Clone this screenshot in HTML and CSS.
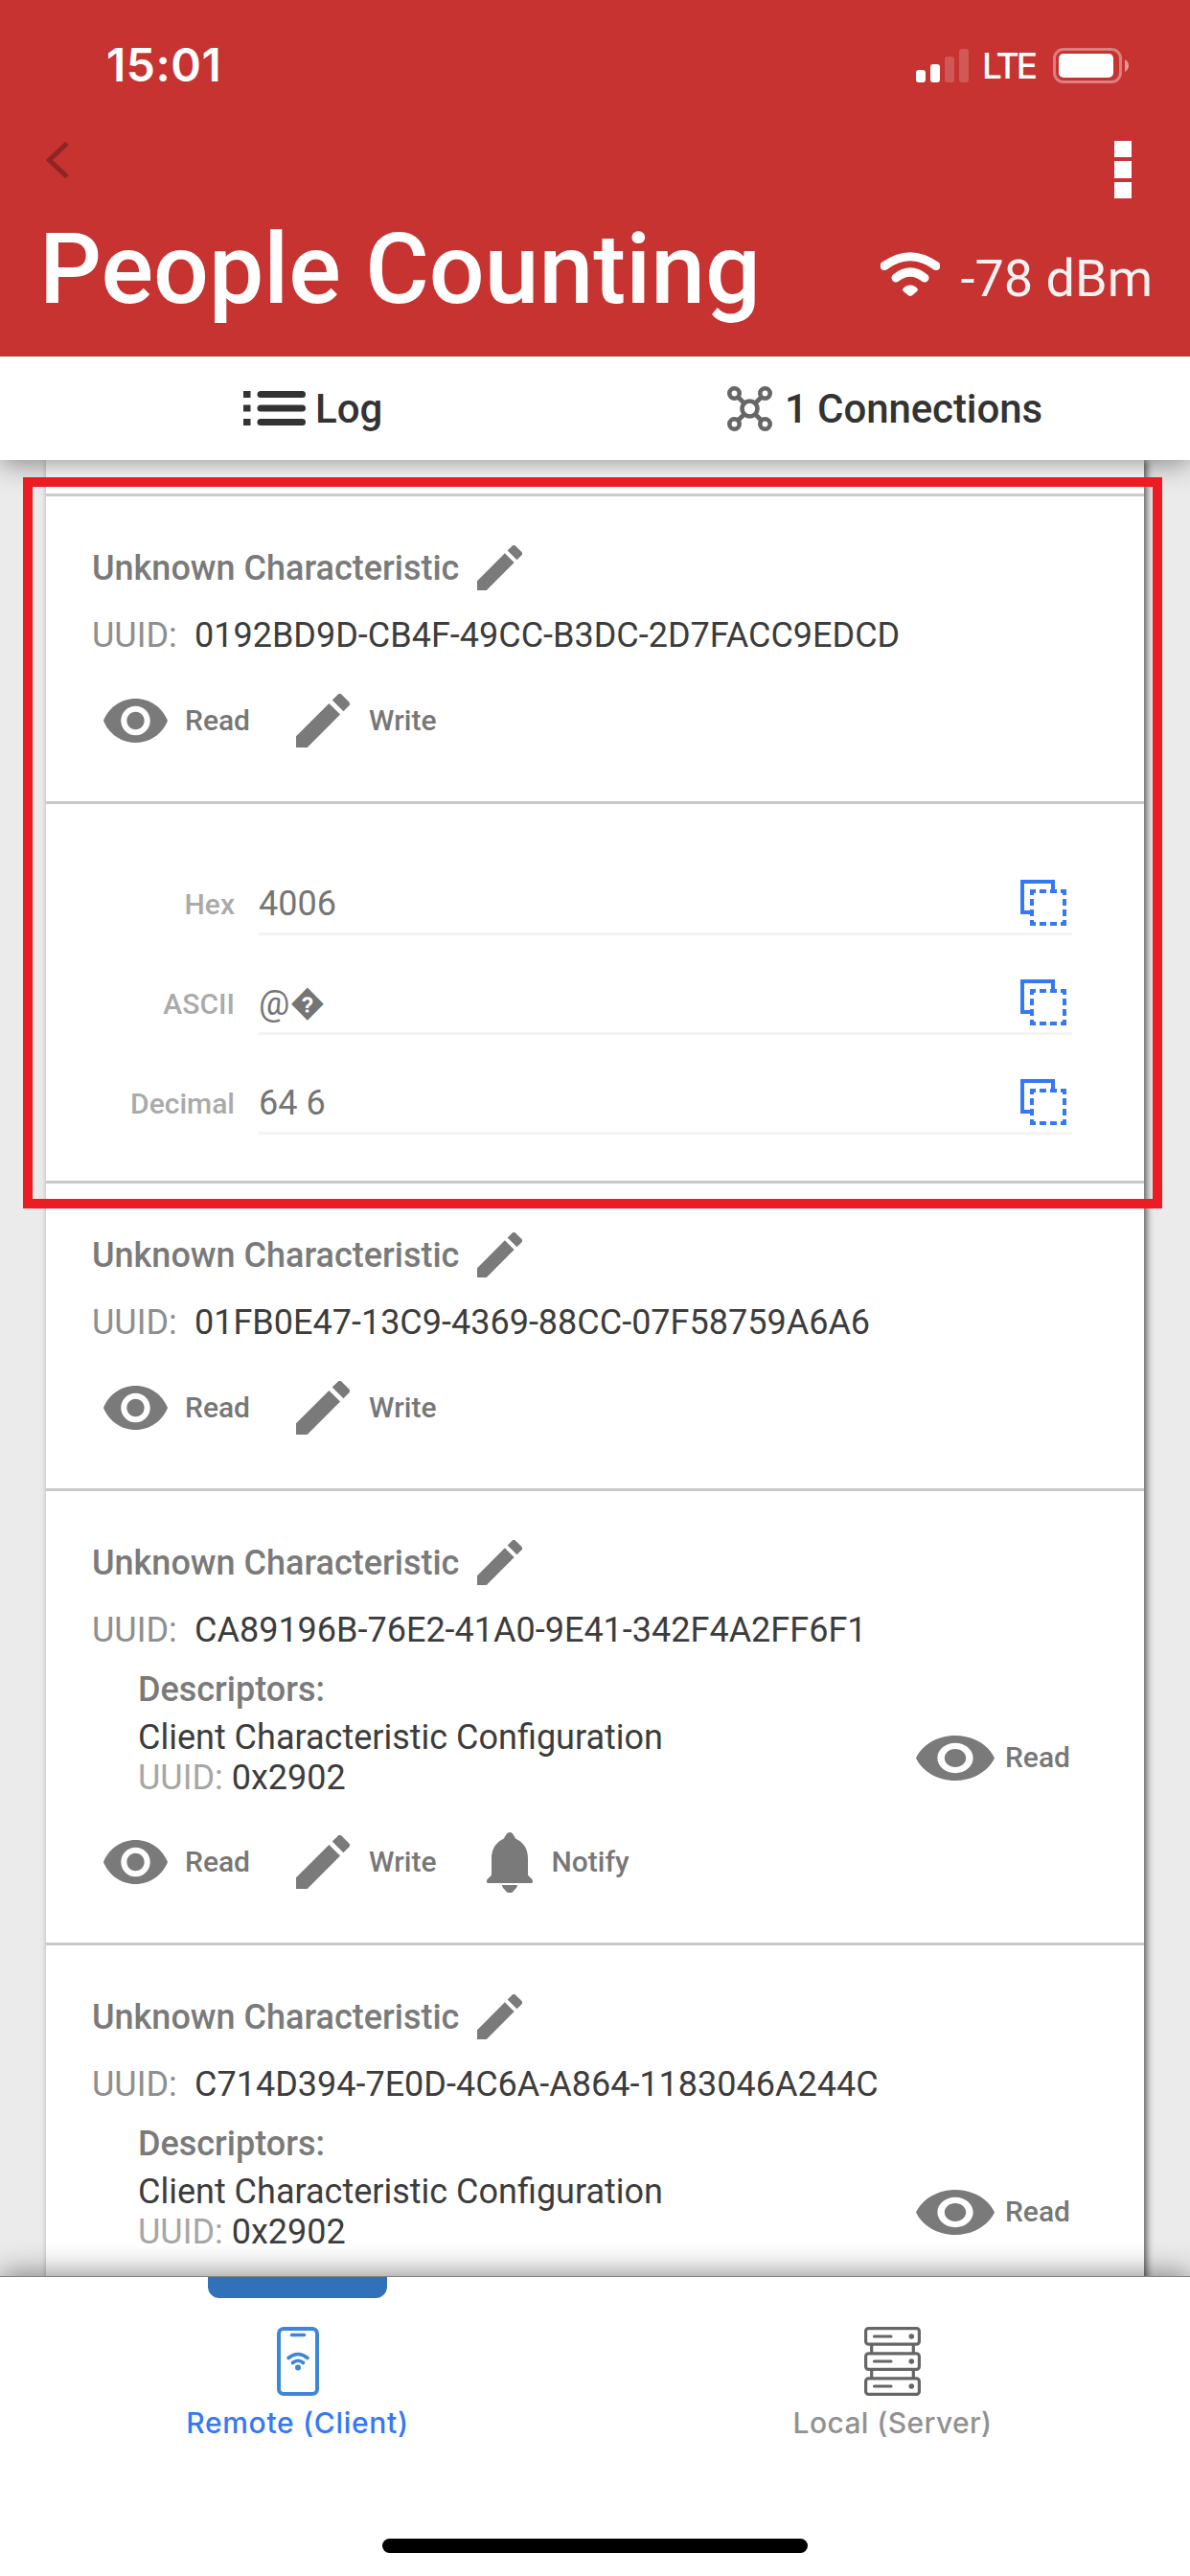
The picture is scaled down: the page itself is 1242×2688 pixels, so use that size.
FILE: index.html
```html
<!DOCTYPE html>
<html lang="en">
<head>
<meta charset="utf-8">
<title>People Counting</title>
<link rel="stylesheet" href="styles.css">
</head>
<body>
<svg class="sprite" aria-hidden="true">
  <symbol id="pencil" viewBox="3 3 18 18"><path d="M3 17.25V21h3.75L17.81 9.94l-3.75-3.75L3 17.25zM20.71 7.04a1 1 0 0 0 0-1.41l-2.34-2.34a1 1 0 0 0-1.41 0l-1.83 1.83 3.75 3.75 1.83-1.83z"/></symbol>
  <symbol id="eye" viewBox="1 4.5 22 15" preserveAspectRatio="none"><path d="M12 4.500C7 4.500 2.730 7.610 1 12c1.730 4.390 6 7.500 11 7.500s9.270-3.110 11-7.500c-1.730-4.390-6-7.500-11-7.500zM12 17c-2.760 0-5-2.240-5-5s2.240-5 5-5 5 2.240 5 5-2.240 5-5 5zm0-8c-1.660 0-3 1.340-3 3s1.340 3 3 3 3-1.340 3-3-1.340-3-3-3z"/></symbol>
  <symbol id="bell" viewBox="0 0 48 63"><path d="M24 0c3 0 4.500 3.500 6 6.500C38 10 43 17 43 27v17c0 2 5 4 5 7 0 1.500-.5 2-1.500 2h-45C.5 53 0 52.500 0 51c0-3 5-5 5-7V27C5 17 10 10 18 6.500 19.500 3.500 21 0 24 0zM16 55h16c0 3-3 4.500-5 7.500-1 .7-5 .7-6 0-2-3-5-4.500-5-7.500z"/></symbol>
  <symbol id="copy" viewBox="0 0 48 48"><path fill="none" stroke="currentColor" stroke-width="4" d="M14 34H2V2h32v12"/><path d="M10 10h6v4h-2v2h-4zM20 10h7v4h-7zM31 10h7v4h-7zM42 10h6v6h-4v-2h-2zM10 20h4v7h-4zM10 31h4v7h-4zM44 20h4v7h-4zM44 31h4v7h-4zM10 42h4v2h2v4h-6zM20 44h7v4h-7zM31 44h7v4h-7zM44 42h4v6h-6v-4h2z"/></symbol>
</svg>
<div class="screen">
  <header class="header">
    <div class="status">
      <span class="time">15:01</span>
      <div class="status-right">
        <svg class="signal" viewBox="0 0 55 35" fill="#fff"><rect y="22" width="10" height="13" rx="3"/><rect x="15" y="16" width="10" height="19" rx="3"/><g opacity=".18"><rect x="30" y="8" width="10" height="27" rx="3"/><rect x="45" width="10" height="35" rx="3"/></g></svg>
        <span class="carrier">LTE</span>
        <svg class="battery" viewBox="0 0 79 37" fill="#fff"><rect x="1.500" y="1.500" width="69" height="34" rx="9.500" fill="none" stroke="#fff" stroke-width="3" opacity=".38"/><rect x="6" y="6" width="57" height="25" rx="5"/><path d="M75 12c5.300 2.500 5.300 10.500 0 13z" opacity=".5"/></svg>
      </div>
    </div>
    <div class="navbar">
      <svg class="back" viewBox="0 0 24 38" fill="none" stroke="#8f2523" stroke-width="5"><path d="M22 1.500 3.500 19l18.500 17.500"/></svg>
      <div class="more"><i></i><i></i><i></i></div>
    </div>
    <div class="heading">
      <h1>People Counting</h1>
      <div class="rssi">
        <svg class="wifi" viewBox="0 0 62 46"><path d="M4 14.500Q31-5 58 14.500M16 27Q31 15 46 27" fill="none" stroke="#fff" stroke-width="9" stroke-linecap="round"/><path d="M23 39c3-6 13-6 16 0 0 2-2 2.500-6 6.300-1.500.9-2.500.9-4 0C25 41.500 23 41 23 39z" fill="#fff"/></svg>
        <span>-78 dBm</span>
      </div>
    </div>
  </header>
  <nav class="tabs">
    <div class="tab log">
      <svg class="list-icon" viewBox="0 0 65 36" fill="#333"><path d="M0 0h7.500v7H0zM0 14.500h7.500v7H0zM0 29h7.500v7H0z"/><rect x="14.500" width="50.500" height="7" rx="3.500"/><rect x="14.500" y="14.500" width="50.500" height="7" rx="3.500"/><rect x="14.500" y="29" width="50.500" height="7" rx="3.500"/></svg>
      <span>Log</span>
    </div>
    <div class="tab conn">
      <svg class="hub-icon" viewBox="0 0 47 47" fill="none" stroke="#666" stroke-width="4.600"><circle cx="23.500" cy="23.500" r="8"/><circle cx="7.500" cy="7.500" r="5.200"/><circle cx="39.500" cy="7.500" r="5.200"/><circle cx="7.500" cy="39.500" r="5.200"/><circle cx="39.500" cy="39.500" r="5.200"/><path d="m11 11 7 7M36 11l-7 7M11 36l7-7M36 36l-7-7"/></svg>
      <span>1 Connections</span>
    </div>
  </nav>
  <main class="content">
    <div class="card">
      <div class="stub"></div>
      <section class="characteristic">
        <div class="name"><h2>Unknown Characteristic</h2><svg><use href="#pencil"/></svg></div>
        <div class="uuid"><span>UUID:</span><b>0192BD9D-CB4F-49CC-B3DC-2D7FACC9EDCD</b></div>
        <div class="actions">
          <div class="action read"><svg><use href="#eye"/></svg><span>Read</span></div>
          <div class="action write"><svg><use href="#pencil"/></svg><span>Write</span></div>
        </div>
      </section>
      <section class="values">
        <div class="value"><span class="label">Hex</span><div class="field"><span>4006</span><svg><use href="#copy"/></svg></div></div>
        <div class="value"><span class="label">ASCII</span><div class="field"><span>@&#xFFFD;</span><svg><use href="#copy"/></svg></div></div>
        <div class="value"><span class="label">Decimal</span><div class="field"><span>64 6</span><svg><use href="#copy"/></svg></div></div>
      </section>
      <section class="characteristic">
        <div class="name"><h2>Unknown Characteristic</h2><svg><use href="#pencil"/></svg></div>
        <div class="uuid"><span>UUID:</span><b>01FB0E47-13C9-4369-88CC-07F58759A6A6</b></div>
        <div class="actions">
          <div class="action read"><svg><use href="#eye"/></svg><span>Read</span></div>
          <div class="action write"><svg><use href="#pencil"/></svg><span>Write</span></div>
        </div>
      </section>
      <section class="characteristic tall">
        <div class="name"><h2>Unknown Characteristic</h2><svg><use href="#pencil"/></svg></div>
        <div class="uuid"><span>UUID:</span><b>CA89196B-76E2-41A0-9E41-342F4A2FF6F1</b></div>
        <h3>Descriptors:</h3>
        <div class="descriptor">
          <div><p>Client Characteristic Configuration</p><p><span>UUID:</span> 0x2902</p></div>
          <div class="action wide"><svg><use href="#eye"/></svg><span>Read</span></div>
        </div>
        <div class="actions">
          <div class="action read"><svg><use href="#eye"/></svg><span>Read</span></div>
          <div class="action write"><svg><use href="#pencil"/></svg><span>Write</span></div>
          <div class="action notify"><svg><use href="#bell"/></svg><span>Notify</span></div>
        </div>
      </section>
      <section class="characteristic tall">
        <div class="name"><h2>Unknown Characteristic</h2><svg><use href="#pencil"/></svg></div>
        <div class="uuid"><span>UUID:</span><b>C714D394-7E0D-4C6A-A864-1183046A244C</b></div>
        <h3>Descriptors:</h3>
        <div class="descriptor">
          <div><p>Client Characteristic Configuration</p><p><span>UUID:</span> 0x2902</p></div>
          <div class="action wide"><svg><use href="#eye"/></svg><span>Read</span></div>
        </div>
      </section>
    </div>
  </main>
  <footer class="bottom">
    <div class="item active">
      <div class="indicator"></div>
      <svg class="phone" viewBox="0 0 44 72" fill="none" stroke="#3d87d6" stroke-width="4" stroke-linecap="round"><rect x="2" y="2" width="40" height="68" rx="5"/><path d="M15.500 8.500h13M12 32.500q10-8 20 0M16.500 37.500q5.500-4.500 11 0" stroke-width="3.600"/><circle cx="22" cy="42.500" r="3" fill="#3d87d6" stroke="none"/></svg>
      <span>Remote (Client)</span>
    </div>
    <div class="item local">
      <div class="indicator"></div>
      <svg class="server" viewBox="0 0 59 72" fill="none" stroke="#666" stroke-width="3.200" stroke-linecap="round"><rect x="1.600" y="1.600" width="55.800" height="16.600" rx="3"/><rect x="1.600" y="27.800" width="55.800" height="16.600" rx="3"/><rect x="1.600" y="53.800" width="55.800" height="16.600" rx="3"/><path stroke-linecap="butt" d="M7.700 19v8M51.300 19v8M7.700 45v8M51.300 45v8"/><path d="M10.500 10H28M10.500 36H28M10.500 62H28"/><g fill="#666" stroke="none"><circle cx="49.300" cy="10" r="2.800"/><circle cx="49.300" cy="36" r="2.800"/><circle cx="49.300" cy="62" r="2.800"/></g></svg>
      <span>Local (Server)</span>
    </div>
    <div class="home-bar"></div>
  </footer>
  <div class="highlight"></div>
</div>
</body>
</html>
```
FILE: styles.css
```css
* { box-sizing: border-box; }
body { margin: 0; font-family: Roboto, sans-serif; font-size: 36px; line-height: 42px; color: #3c3c3c; }
h1, h2, h3, p { margin: 0; }
svg { display: block; flex: none; }
span { white-space: nowrap; }
.sprite { position: absolute; width: 0; height: 0; }
.screen { position: relative; width: 1242px; height: 2688px; overflow: hidden; display: flex; flex-direction: column; background: #ebebeb; }

/* header */
.header { position: relative; z-index: 2; height: 372px; flex: none; background: #c63331; color: #fff; }
.status { height: 136px; padding: 0 64px 0 111px; display: flex; align-items: center; justify-content: space-between; font-family: Inter, sans-serif; }
.time { font-size: 48px; font-weight: 600; letter-spacing: .5px; }
.status-right { display: flex; align-items: center; }
.signal { width: 55px; height: 35px; }
.carrier { font-size: 37px; font-weight: 500; letter-spacing: -3px; margin: 2px 19px 0 14px; }
.battery { width: 79px; height: 37px; }
.navbar { height: 84px; padding: 11px 61px 0 48px; display: flex; justify-content: space-between; align-items: flex-start; }
.back { width: 24px; height: 38px; margin-top: 1px; }
.more { display: flex; flex-direction: column; gap: 4px; }
.more i { width: 18px; height: 17.300px; background: #fff; }
.heading { height: 152px; padding: 0 39px 0 41px; display: flex; justify-content: space-between; }
.heading h1 { padding-top: 2px; font-size: 102px; line-height: 118px; font-weight: 500; }
.rssi { display: flex; align-items: flex-start; padding-top: 43px; font-size: 54px; line-height: 56px; color: #f2f2f2; gap: 22px; }
.rssi span { font-weight: 400; }
.wifi { width: 62px; height: 46px; }

/* tabs */
.tabs { position: relative; z-index: 1; height: 108px; flex: none; display: grid; grid-template-columns: 1fr 1fr; background: #fff; box-shadow: 0 3px 28px rgba(0,0,0,.45); font-size: 42px; font-weight: 500; color: #333; }
.tab { display: flex; align-items: center; }
.tab span { padding-top: 1px; }
.log { padding-left: 254px; gap: 10px; }
.conn { padding-left: 138px; gap: 13px; letter-spacing: -.1px; }
.list-icon { width: 65px; height: 36px; }
.hub-icon { width: 47px; height: 47px; }

/* list */
.content { flex: 1; min-height: 0; overflow: hidden; padding: 0 48px; }
.card { background: #fff; height: 2100px; box-shadow: 3px 0 7px rgba(0,0,0,.6); }
.stub { height: 38px; border-bottom: 3px solid #ccc; }
.characteristic { height: 321px; padding: 51px 48px 0; border-bottom: 3px solid #c9c9c9; }
.characteristic.tall { height: 474px; }
.name { display: flex; align-items: center; gap: 19px; height: 47px; }
.name h2, h3 { font-size: 36px; font-weight: 500; color: #7a7a7a; }
.name svg { width: 47px; height: 47px; fill: #7a7a7a; }
.uuid { display: flex; margin-top: 26px; }
.uuid span { width: 107px; color: #8e8e8e; }
.uuid b { font-weight: 400; }
.actions { display: flex; height: 64px; margin-top: 36px; padding-left: 12px; }
.action { display: flex; align-items: center; font-size: 30px; font-weight: 500; color: #777; fill: #7a7a7a; }
.read svg { width: 67px; height: 46px; margin-right: 18px; }
.write { margin-left: 48px; }
.write svg { width: 56px; height: 56px; margin-right: 20px; }
.notify { margin-left: 53px; }
.notify svg { width: 48px; height: 63px; margin-right: 19px; }
h3 { margin: 20px 0 8px 48px; }
.descriptor { display: flex; justify-content: space-between; padding: 0 29px 0 48px; }
.descriptor p span { color: #a6a6a6; }
.wide svg { width: 82px; height: 47px; margin-right: 11px; }
.tall .actions { margin-top: 35px; }

.values { height: 396px; padding: 33px 75px 0 48px; border-bottom: 3px solid #c9c9c9; }
.value { display: flex; gap: 25px; padding-top: 39px; color: #757575; }
.label { width: 149px; padding-top: 12px; text-align: right; font-size: 30px; font-weight: 500; color: #aaa; }
.field { flex: 1; height: 65px; display: flex; align-items: center; justify-content: space-between; padding-right: 6px; border-bottom: 3px solid #f4f4f4; }
.field span { height: 42px; margin-top: 2px; }
.field svg { width: 48px; height: 48px; fill: #3478f6; color: #3478f6; margin-bottom: 1px; }

/* bottom navigation */
.bottom { position: relative; z-index: 1; height: 313px; flex: none; display: grid; grid-template-columns: 621px 621px; background: #fff; border-top: 1px solid #858585; box-shadow: 0 -3px 28px rgba(0,0,0,.45); font-family: Inter, sans-serif; font-size: 30px; font-weight: 500; letter-spacing: .7px; color: #919191; }
.item { display: flex; flex-direction: column; align-items: center; line-height: 36px; }
.active { color: #3478f6; }
.local { letter-spacing: .4px; }
.indicator { width: 187px; height: 22px; margin-bottom: 30px; }
.active .indicator { background: #3071b9; border-radius: 0 0 12px 12px; }
.phone { width: 44px; height: 72px; }
.server { width: 59px; height: 72px; }
.item span { margin-top: 10px; }
.home-bar { position: absolute; left: 399px; bottom: 24px; width: 444px; height: 15px; border-radius: 8px; background: #000; }

.highlight { position: absolute; z-index: 3; left: 24px; top: 498px; width: 1189px; height: 763px; border: 10px solid #ed1c24; }
```
